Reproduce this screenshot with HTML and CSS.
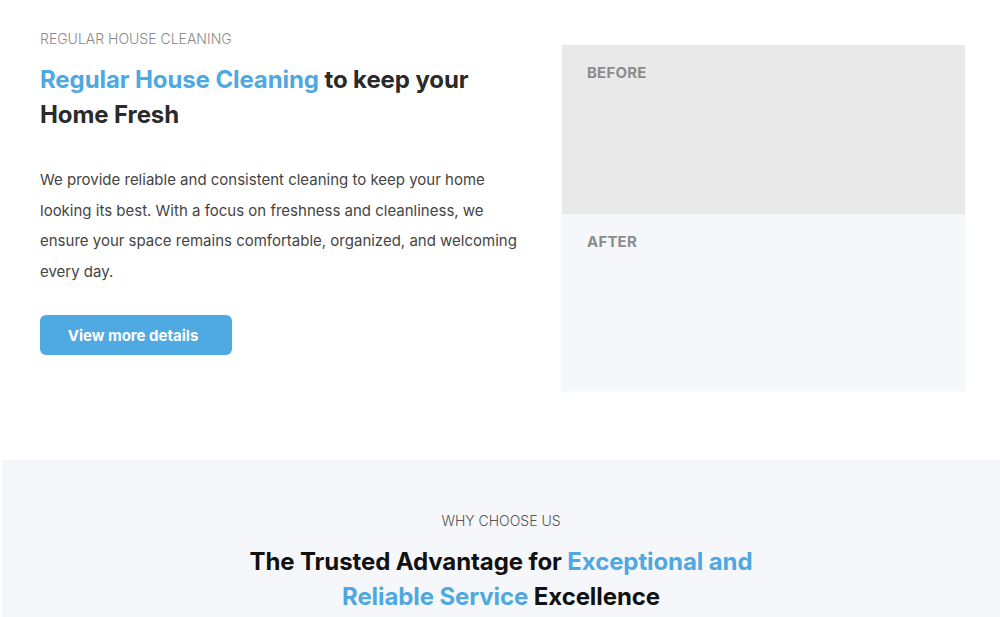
FILE: index.html
```html
<!DOCTYPE html>
<html lang="en">
<head>
<meta charset="utf-8">
<title>Regular House Cleaning</title>
<link rel="stylesheet" href="styles.css">
</head>
<body>
<section class="service">
  <div class="service-text">
    <p class="eyebrow">REGULAR HOUSE CLEANING</p>
    <h1 class="title"><span class="accent">Regular House Cleaning</span> to keep your Home Fresh</h1>
    <p class="desc">We provide reliable and consistent cleaning to keep your home looking its best. With a focus on freshness and cleanliness, we ensure your space remains comfortable, organized, and welcoming every day.</p>
    <a class="btn" href="#">View more details</a>
  </div>
  <div class="compare">
    <div class="panel before"><span class="label">BEFORE</span></div>
    <div class="panel after"><span class="label">AFTER</span></div>
  </div>
</section>
<section class="why">
  <p class="eyebrow center">WHY CHOOSE US</p>
  <h2 class="why-title">The Trusted Advantage for <span class="accent">Exceptional and Reliable Service</span> Excellence</h2>
</section>
</body>
</html>
```

FILE: styles.css
```css
* { box-sizing: border-box; }
html, body { margin: 0; padding: 0; background: #fff; }
body {
  font-family: "Inter", "Noto Sans", sans-serif;
  color: #2b2b2b;
  overflow: hidden;
}
.service {
  display: grid;
  grid-template-columns: 490px 403px;
  column-gap: 32px;
  padding: 30px 35px 69px 40px;
}
.eyebrow {
  margin: 0;
  font-size: 14px;
  font-weight: 300;
  color: #8a8a8a;
  line-height: 18px;
}
.title {
  margin: 14px 0 0;
  font-size: 24px;
  font-weight: 700;
  line-height: 35px;
  color: #2a2a2a;
  letter-spacing: -0.1px;
  max-width: 460px;
}
.accent { color: #4ea8e1; }
.desc {
  margin: 33px 0 0;
  font-size: 15px;
  line-height: 30.5px;
  color: #444;
}
.btn {
  display: inline-flex;
  align-items: center;
  justify-content: center;
  margin-top: 28px;
  width: 192px;
  height: 40px;
  padding-right: 6px;
  border-radius: 6px;
  background: #4fa9e3;
  color: #fff;
  font-weight: 700;
  font-size: 15px;
  text-decoration: none;
}
.compare {
  margin-top: 15px;
  display: flex;
  flex-direction: column;
  height: 346px;
  box-shadow: 0 0 4px rgba(0,0,0,0.04);
}
.panel {
  padding: 17px 25px;
}
.before { background: #e9e9e9; height: 169px; }
.after { background: #f5f7fa; flex: 1; }
.label {
  font-size: 15px;
  font-weight: 700;
  color: #8c8c8c;
  letter-spacing: 0.2px;
}
.why {
  margin-left: 2px;
  background: #f6f7fa;
  padding: 52px 0 40px;
  text-align: center;
}
.eyebrow.center { color: #555; }
.why-title {
  margin: 14px auto 0;
  max-width: 530px;
  font-size: 24px;
  font-weight: 700;
  line-height: 35px;
  color: #111;
  letter-spacing: -0.1px;
}
```
